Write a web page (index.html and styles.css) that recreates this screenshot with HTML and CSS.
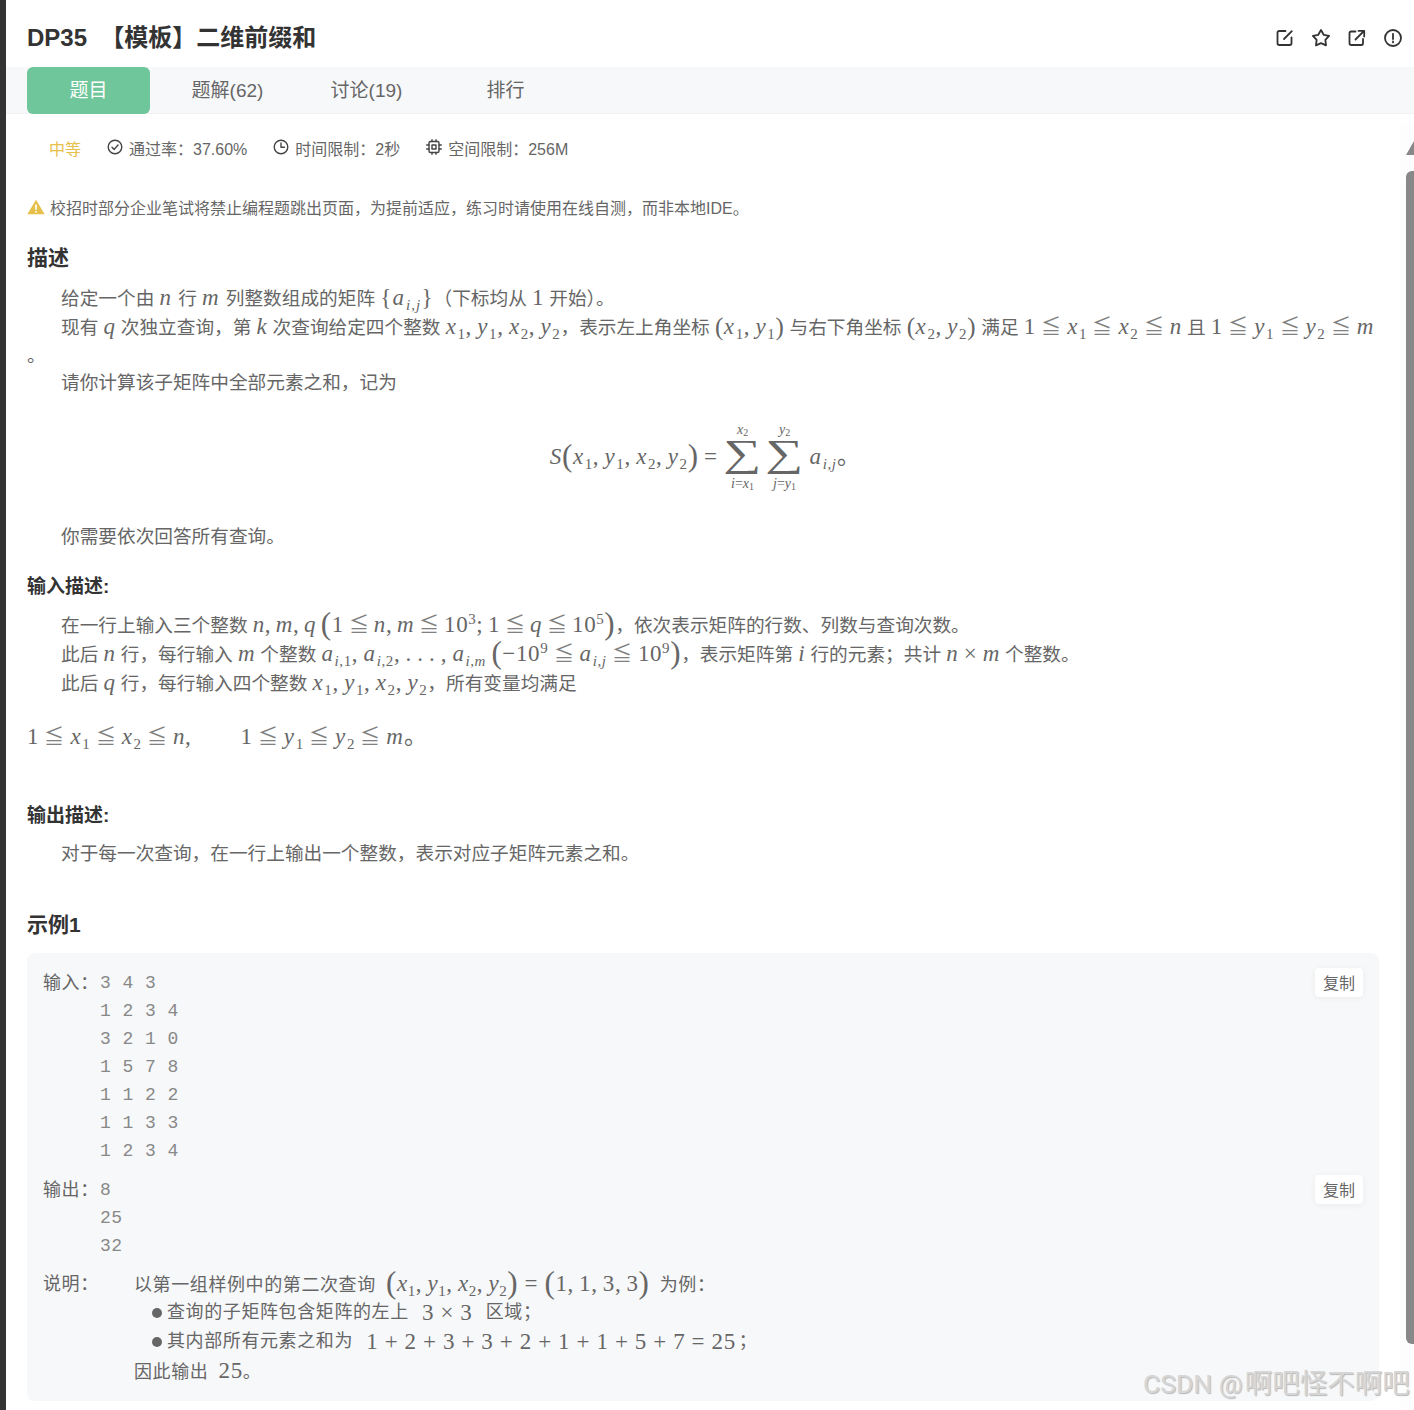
FILE: index.html
```html
<!DOCTYPE html>
<html lang="zh-CN">
<head>
<meta charset="utf-8">
<title>DP35 【模板】二维前缀和</title>
<link rel="stylesheet" href="styles.css">
</head>
<body>
<div class="page">
  <div class="rail"></div>
  <main class="main">
    <header class="top">
      <h1 class="title">DP35 &nbsp;【模板】二维前缀和</h1>
      <div class="actions">
        <svg class="act" viewBox="0 0 18 18"><path d="M9.500 2H3.200A1.700 1.700 0 0 0 1.500 3.700v10.600A1.700 1.700 0 0 0 3.200 16h10.600a1.700 1.700 0 0 0 1.700-1.700V8.500"/><path d="M8 10 15.800 2.200"/></svg>
        <svg class="act" viewBox="0 0 18 18"><path d="M9 1l2.700 4.780 5.380 1.090-3.710 4.050.63 5.460L9 14.100l-5 2.280.63-5.460L.92 6.870l5.380-1.090z"/></svg>
        <svg class="act" viewBox="0 0 18 18"><path d="M7.500 2.500H3.200a1.700 1.700 0 0 0-1.700 1.700v10.100A1.700 1.700 0 0 0 3.200 16h10.100A1.700 1.700 0 0 0 15 14.300V10"/><path d="M7.500 10.500 15.800 2.200M10.500 1.800h5.700v5.700"/></svg>
        <svg class="act" viewBox="0 0 18 18"><circle cx="9" cy="9" r="8"/><path d="M9 4.800v5.200M9 12.400v1"/></svg>
      </div>
    </header>
    <nav class="tabs">
      <a class="tab tab-on">题目</a>
      <a class="tab">题解(62)</a>
      <a class="tab">讨论(19)</a>
      <a class="tab">排行</a>
    </nav>
    <div class="content">
      <div class="stats">
        <span class="level">中等</span>
        <span class="stat"><svg class="sico" viewBox="0 0 16 16"><circle cx="8" cy="8" r="6.800"/><path d="M5 8.200l2.200 2.200L11 6"/></svg>通过率：37.60%</span>
        <span class="stat"><svg class="sico" viewBox="0 0 16 16"><circle cx="8" cy="8" r="6.800"/><path d="M8 4v4.300h3.500"/></svg>时间限制：2秒</span>
        <span class="stat"><svg class="sico" viewBox="0 0 16 16"><rect x="3" y="2.500" width="10" height="11" rx="1.500"/><rect x="6" y="6" width="4" height="4"/><path d="M.7 6H3M.7 10H3M13 6h2.300M13 10h2.300M6 .7v1.800M10 .7v1.800M6 13.500v1.800M10 13.500v1.800"/></svg>空间限制：256M</span>
      </div>
      <div class="notice"><svg class="warn" viewBox="0 0 16 16"><path class="warn-tri" d="M8 1.500 15.700 14.500H.3z"/><path class="warn-bang" d="M8 5.800v4.700M8 11.500v1.300"/></svg>校招时部分企业笔试将禁止编程题跳出页面，为提前适应，练习时请使用在线自测，而非本地IDE。</div>

      <h2 class="h-main h-desc">描述</h2>
      <div class="ln in">给定一个由 <span class="m m-w"><i>n</i></span> 行 <span class="m m-w"><i>m</i></span> 列整数组成的矩阵 <span class="m m-brace">{<i>a</i><sub><i>i,j</i></sub>}</span>（下标均从 <span class="m">1</span> 开始）。</div>
      <div class="ln in">现有 <span class="m"><i>q</i></span> 次独立查询，第 <span class="m"><i>k</i></span> 次查询给定四个整数 <span class="m"><i>x</i><sub>1</sub>, <i>y</i><sub>1</sub>, <i>x</i><sub>2</sub>, <i>y</i><sub>2</sub></span>，表示左上角坐标 <span class="m"><span class="p">(</span><i>x</i><sub>1</sub>, <i>y</i><sub>1</sub><span class="p">)</span></span> 与右下角坐标 <span class="m"><span class="p">(</span><i>x</i><sub>2</sub>, <i>y</i><sub>2</sub><span class="p">)</span></span> 满足 <span class="m">1 <span class="le">≦</span> <i>x</i><sub>1</sub> <span class="le">≦</span> <i>x</i><sub>2</sub> <span class="le">≦</span> <i>n</i></span> 且 <span class="m">1 <span class="le">≦</span> <i>y</i><sub>1</sub> <span class="le">≦</span> <i>y</i><sub>2</sub> <span class="le">≦</span> <i>m</i></span></div>
      <div class="ln ln-short">。</div>
      <div class="ln in">请你计算该子矩阵中全部元素之和，记为</div>

      <div class="display big">
        <span class="m m-d"><i>S</i><span class="p">(</span><i>x</i><sub>1</sub>, <i>y</i><sub>1</sub>, <i>x</i><sub>2</sub>, <i>y</i><sub>2</sub><span class="p">)</span> =</span>
        <span class="sum"><span class="lim"><i>x</i><sub>2</sub></span><span class="sig">∑</span><span class="lim"><i>i</i>=<i>x</i><sub>1</sub></span></span>
        <span class="sum"><span class="lim"><i>y</i><sub>2</sub></span><span class="sig">∑</span><span class="lim"><i>j</i>=<i>y</i><sub>1</sub></span></span>
        <span class="m m-d"><i>a</i><sub><i>i,j</i></sub>。</span>
      </div>

      <div class="ln in">你需要依次回答所有查询。</div>

      <h3 class="h-sub h-input">输入描述:</h3>
      <div class="ln in big">在一行上输入三个整数 <span class="m m-tight"><i>n</i>, <i>m</i>, <i>q</i> <span class="p">(</span>1 <span class="le">≦</span> <i>n</i>, <i>m</i> <span class="le">≦</span> 10<sup>3</sup>; 1 <span class="le">≦</span> <i>q</i> <span class="le">≦</span> 10<sup>5</sup><span class="p">)</span></span>，依次表示矩阵的行数、列数与查询次数。</div>
      <div class="ln in big">此后 <span class="m"><i>n</i></span> 行，每行输入 <span class="m"><i>m</i></span> 个整数 <span class="m"><i>a</i><sub><i>i,</i>1</sub>, <i>a</i><sub><i>i,</i>2</sub>, . . . , <i>a</i><sub><i>i,m</i></sub> <span class="p">(</span>−10<sup>9</sup> <span class="le">≦</span> <i>a</i><sub><i>i,j</i></sub> <span class="le">≦</span> 10<sup>9</sup><span class="p">)</span></span>，表示矩阵第 <span class="m"><i>i</i></span> 行的元素；共计 <span class="m"><i>n</i> × <i>m</i></span> 个整数。</div>
      <div class="ln in">此后 <span class="m"><i>q</i></span> 行，每行输入四个整数 <span class="m"><i>x</i><sub>1</sub>, <i>y</i><sub>1</sub>, <i>x</i><sub>2</sub>, <i>y</i><sub>2</sub></span>，所有变量均满足</div>
      <div class="ln formula-left"><span class="m">1 <span class="le">≦</span> <i>x</i><sub>1</sub> <span class="le">≦</span> <i>x</i><sub>2</sub> <span class="le">≦</span> <i>n</i>,</span><span class="m m-gap">1 <span class="le">≦</span> <i>y</i><sub>1</sub> <span class="le">≦</span> <i>y</i><sub>2</sub> <span class="le">≦</span> <i>m</i>。</span></div>

      <h3 class="h-sub h-output">输出描述:</h3>
      <div class="ln in">对于每一次查询，在一行上输出一个整数，表示对应子矩阵元素之和。</div>

      <h2 class="h-main h-example">示例1</h2>
      <section class="sample">
        <div class="row">
          <span class="label">输入：</span>
          <pre class="code">3 4 3
1 2 3 4
3 2 1 0
1 5 7 8
1 1 2 2
1 1 3 3
1 2 3 4</pre>
          <button class="copy">复制</button>
        </div>
        <div class="row row-out">
          <span class="label">输出：</span>
          <pre class="code">8
25
32</pre>
          <button class="copy">复制</button>
        </div>
        <div class="row row-note">
          <span class="label label-note">说明：</span>
          <div class="note big">
            <div class="nl">以第一组样例中的第二次查询 &nbsp;<span class="n"><span class="p">(</span><i>x</i><sub>1</sub>,&#8201;<i>y</i><sub>1</sub>,&#8201;<i>x</i><sub>2</sub>,&#8201;<i>y</i><sub>2</sub><span class="p">)</span> = <span class="p">(</span>1,&#8201;1,&#8201;3,&#8201;3<span class="p">)</span></span>&nbsp; 为例：</div>
            <div class="nl bullet"><span class="dot"></span>查询的子矩阵包含矩阵的左上 &nbsp;<span class="n">3 × 3</span>&nbsp; 区域；</div>
            <div class="nl bullet"><span class="dot"></span>其内部所有元素之和为 &nbsp;<span class="n">1 + 2 + 3 + 3 + 2 + 1 + 1 + 5 + 7 = 25</span>；</div>
            <div class="nl">因此输出 &nbsp;<span class="n">25</span>。</div>
          </div>
        </div>
      </section>
    </div>
  </main>
</div>
<div class="scroll-track"></div>
<div class="scroll-arrow"></div>
<div class="scroll-thumb"></div>
<div class="watermark"><span class="wm-latin">CSDN @</span>啊吧怪不啊吧</div>
</body>
</html>
```
FILE: styles.css
```css
* { box-sizing: border-box; }
html, body { margin: 0; height: 1410px; overflow: hidden; background: #fff; }
body { font-family: "Liberation Sans", "Noto Sans CJK SC", sans-serif; color: #666; }
.page { display: flex; height: 1410px; overflow: hidden; }
.rail { width: 6px; flex: none; background: #333; }
.main { flex: 1; min-width: 0; }

.top { height: 67px; display: flex; align-items: center; justify-content: space-between; padding: 8px 12px 0 21px; }
.title { margin: 0; font-size: 24px; line-height: 32px; font-weight: 700; color: #333; }
.actions { display: flex; gap: 18px; }
.act { width: 18px; height: 18px; fill: none; stroke: #333; stroke-width: 1.800; stroke-linecap: round; stroke-linejoin: round; }

.tabs { height: 47px; display: flex; gap: 16px; padding-left: 21px; background: #f7f8fa; border-bottom: 1px solid #f1f2f4; }
.tab { width: 123px; height: 47px; display: flex; align-items: center; justify-content: center; padding-bottom: 5px; font-size: 19px; color: #666; border-radius: 6px; }
.tab-on { background: #6fc69a; color: #fff; }

.content { padding: 0 35px 0 21px; }
.stats { display: flex; align-items: center; height: 24px; margin-top: 22px; padding-left: 22px; font-size: 16px; gap: 26px; }
.level { color: #e6c04a; }
.stat { display: flex; align-items: center; }
.sico { width: 16px; height: 16px; margin-right: 6px; margin-top: -3px; fill: none; stroke: #444; stroke-width: 1.400; stroke-linecap: round; stroke-linejoin: round; }
.notice { display: flex; align-items: center; margin-top: 35px; height: 24px; font-size: 16px; white-space: nowrap; }
.warn { width: 18px; height: 18px; margin-right: 5px; flex: none; }
.warn-tri { fill: #e6c04a; }
.warn-bang { stroke: #fff; stroke-width: 1.500; fill: none; }

.h-main { margin: 0; font-size: 21px; line-height: 30px; font-weight: 700; color: #333; }
.h-desc { margin: 24px 0 10px; }
.h-sub { margin: 0 0 8px; font-size: 19px; line-height: 30px; font-weight: 700; color: #333; }
.h-input { margin-top: 21px; }
.h-output { margin-top: 50px; margin-bottom: 8px; }
.h-example { margin-top: 42px; }

.ln { font-size: 18.670px; line-height: 29px; height: 29px; white-space: nowrap; }
.in { padding-left: 34px; }
.ln-short { height: 27px; }
.formula-left { margin-top: 25px; }

.m { font-family: "Liberation Serif", "DejaVu Serif", serif; font-size: 23px; letter-spacing: .6px; word-spacing: -1px; color: #666; }
.m-w { letter-spacing: 2px; }
.m-brace { letter-spacing: 1.100px; }
.m-tight { word-spacing: -1.700px; }
.m-d { line-height: 30px; }
.m sub, .m sup, .n sub { font-size: 15px; line-height: 0; }
.m sub { vertical-align: -5px; margin-left: 1px; }
.m sup { vertical-align: 8px; }
.le { font-size: 20px; color: #808080; line-height: 0; }
.p { font-size: 25px; line-height: 0; font-weight: 200; vertical-align: -1px; }
.big .p { font-size: 31px; vertical-align: -2px; }
.m-gap { margin-left: 49px; }

.display { display: flex; align-items: center; justify-content: center; gap: 8px; height: 100px; margin: 10px 0 15px; padding-left: 4px; white-space: nowrap; }
.sum { display: inline-flex; flex-direction: column; align-items: center; width: 34px; font-family: "Liberation Serif", "DejaVu Serif", serif; color: #666; }
.sig { font-size: 38px; line-height: 36px; transform: translateY(-4px) scaleX(1.400); }
.lim { font-size: 14px; line-height: 18px; }
.lim sub { font-size: 10px; line-height: 0; vertical-align: -2px; }

.sample { margin-top: 13px; padding: 16px 16px 16px; background: #f7f8fa; border-radius: 8px; height: 448px; }
.row { position: relative; display: flex; }
.row-out { margin-top: 11px; }
.row-note { margin-top: 9px; }
.label { width: 57px; flex: none; font-size: 18px; line-height: 28px; letter-spacing: .6px; }
.label-note { width: 91px; line-height: 30px; }
.code { margin: 0; font-family: "Liberation Mono", monospace; font-size: 18px; line-height: 28px; letter-spacing: .45px; color: #888; }
.copy { position: absolute; right: 0; top: -1px; width: 48px; height: 29px; padding: 0 0 2px; border: 0; border-radius: 4px; background: #fff; color: #666; font-family: inherit; font-size: 16px; box-shadow: 0 1px 6px rgba(0, 0, 0, .06); }
.note { font-family: "Liberation Serif", "Noto Sans CJK SC", serif; font-size: 18px; letter-spacing: .6px; white-space: nowrap; }
.nl { height: 29px; line-height: 29px; }
.n { font-size: 23px; }
.n sub { vertical-align: -5px; }
.bullet { padding-left: 18px; display: flex; align-items: center; }
.bullet .n { margin: 0 3px; }
.dot { width: 10px; height: 10px; border-radius: 50%; background: #666; margin-right: 5px; }

.scroll-track { position: absolute; left: 1400px; top: 125px; width: 14px; height: 1285px; background: #fdfdfd; }
.scroll-arrow { position: absolute; left: 1406px; top: 141px; width: 0; height: 0; border-left: 8px solid transparent; border-bottom: 14px solid #888; }
.scroll-thumb { position: absolute; left: 1406px; top: 171px; width: 8px; height: 1173px; background: #888; border-radius: 6px 0 0 6px; }
.watermark { position: absolute; left: 1143px; top: 1364px; font-size: 27.500px; line-height: 40px; color: #d6d6d6; white-space: nowrap; text-shadow: 1px 1px 1px #b8b8b8; }
.wm-latin { font-family: Roboto, "Liberation Sans", sans-serif; font-size: 26.500px; margin-right: 2px; }
```
